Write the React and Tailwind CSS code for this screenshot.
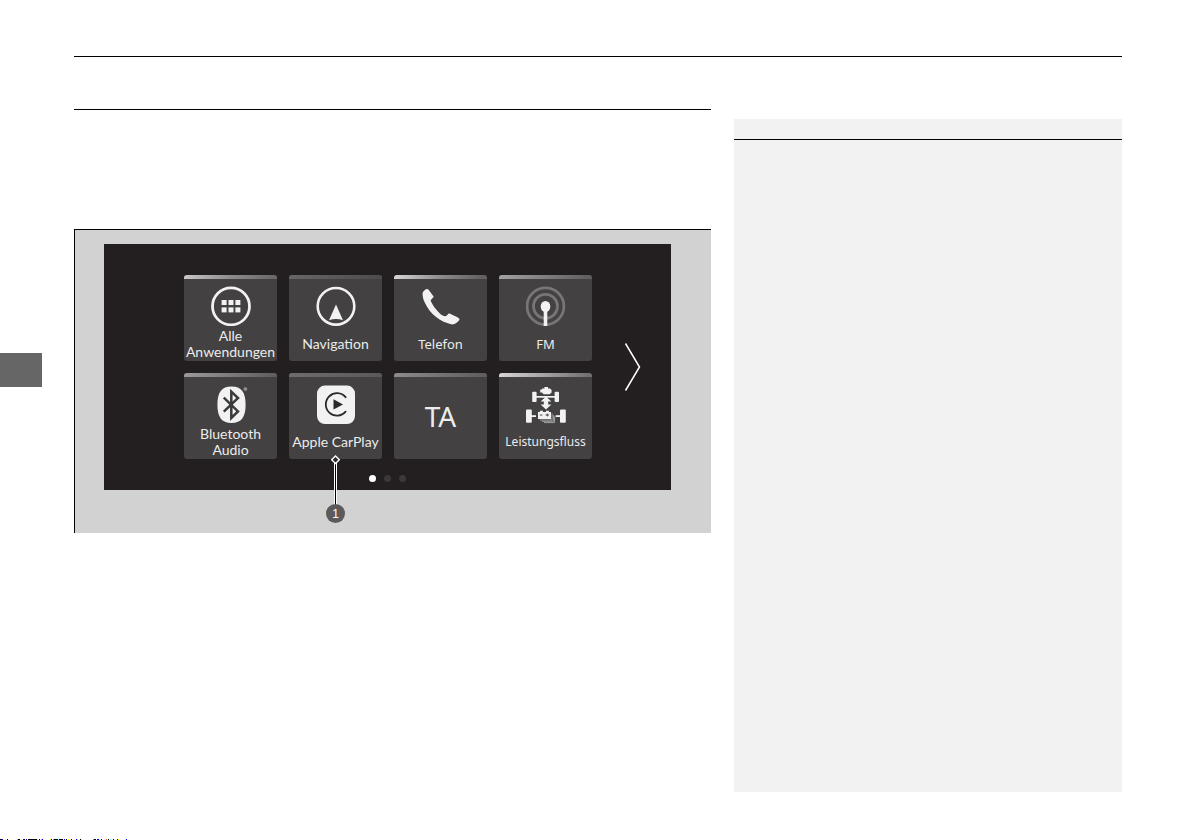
import React from 'react';

const ink = '#f2f2f2';

function AppsIcon() {
  return (
    <svg viewBox="0 0 40 40" className="size-10" fill={ink} aria-hidden="true">
      <circle cx="20" cy="20.3" r="18.5" fill="none" stroke={ink} strokeWidth="2.8" />
      {[10.6, 17.5, 24.4].map((x) =>
        [14, 21.4].map((y) => <rect key={`${x}-${y}`} x={x} y={y} width="5" height="5" />)
      )}
    </svg>
  );
}

function NavigationIcon() {
  return (
    <svg viewBox="0 0 40 40" className="size-10" aria-hidden="true">
      <circle cx="20" cy="20.3" r="18.3" fill="none" stroke={ink} strokeWidth="2.6" />
      <path d="M20 18.6 L27 34.2 Q20 31.6 13 34.2 Z" fill={ink} />
    </svg>
  );
}

function PhoneIcon() {
  return (
    <svg viewBox="0 0 40 40" className="size-10" aria-hidden="true">
      <path
        fill={ink}
        d="M5.6 3 C3.5 4 1.6 5.6 1.5 7.5 C1.6 11 2.4 14.3 4 17 C6.6 22.4 10.4 27.4 14.8 30.8 C19.6 34.6 25.4 37.6 31.2 38.4 C34.4 38.4 37.2 36 38.6 33.6 C38.4 32.6 37.4 31.8 36.4 31.2 L28 27.3 L25.2 30 C23 30.6 20.6 29.2 18.6 27.2 C15.4 24.2 12.6 20.6 10.8 17 C9.9 15.4 9.6 14.6 9.8 13.9 L12.8 10.7 L7.6 3.8 C7 3 6.3 2.7 5.6 3 Z"
      />
    </svg>
  );
}

function RadioIcon() {
  return (
    <svg viewBox="0 0 40 40" className="size-10" aria-hidden="true">
      <g fill="none" stroke="#777575">
        <circle cx="19.5" cy="20.3" r="18.4" strokeWidth="2.8" />
        <circle cx="19.5" cy="20.3" r="12" strokeWidth="2.8" />
      </g>
      <ellipse cx="19.5" cy="20.5" rx="4.8" ry="5.6" fill={ink} />
      <rect x="17.7" y="24" width="3.6" height="16" fill={ink} />
    </svg>
  );
}

function BluetoothIcon() {
  return (
    <svg viewBox="0 0 40 40" className="size-10" aria-hidden="true">
      <path
        fill={ink}
        d="M20.5 2.6 C30.5 2.6 34.6 8.5 34.6 20.8 C34.6 33 30.5 39 20.5 39 C10.5 39 6.4 33 6.4 20.8 C6.4 8.5 10.5 2.6 20.5 2.6 Z"
      />
      <path
        fill="none"
        stroke="#3c3a3a"
        strokeWidth="2.5"
        d="M12.8 13.6 L27 27.4 L20.3 34 V7.6 L27 14 L12.8 27.6"
      />
      <circle cx="34.4" cy="5" r="1.5" fill="#8a8888" stroke="#aaa" strokeWidth="0.6" />
    </svg>
  );
}

function CarPlayIcon() {
  return (
    <svg viewBox="0 0 40 40" className="size-10" aria-hidden="true">
      <rect x="1" y="1.6" width="38" height="38.4" rx="8" fill={ink} />
      <path
        d="M29.6 13.2 A11.2 11.2 0 1 0 29.6 27.6"
        fill="none"
        stroke="#2b2929"
        strokeWidth="1.8"
        strokeLinecap="round"
      />
      <path d="M17.5 15.2 L27 20.4 L17.5 25.6 Z" fill="#2b2929" />
    </svg>
  );
}

function PowerFlowIcon() {
  return (
    <svg viewBox="0 0 40 40" className="size-10" fill={ink} aria-hidden="true">
      <rect x="6.2" y="7.7" width="4.4" height="10.4" rx="1" />
      <rect x="28.6" y="7.7" width="4.4" height="10.4" rx="1" />
      <rect x="10" y="12" width="20" height="1.7" />
      <path d="M14.2 5.6 H16 V4.6 H18.4 V3 H22 V4.6 H24 L25.6 6 V8.4 L23.6 10.2 H17.6 L16 8.6 H14.2 Z" />
      <path d="M20 12.6 L25.4 17.4 H22.2 V20.6 H25.4 L20 25.6 L14.6 20.6 H17.8 V17.4 H14.6 Z" />
      <rect x="0" y="25.4" width="5.8" height="13.4" rx="1" />
      <rect x="34" y="25.4" width="5.8" height="13.4" rx="1" />
      <rect x="5" y="31.2" width="5" height="1.8" />
      <rect x="29.6" y="31.2" width="5" height="1.8" />
      <path d="M12 28 H14 V26.8 H17 V28 H20 V26.8 H23 V28 H25 V35 H12 Z" />
      <path d="M13.8 31 H16.4 M19.6 31 H23 M21.3 29.6 V32.4" stroke="#3c3a3a" strokeWidth="0.9" />
      <path
        d="M26 29.4 V36 H14 M27.4 31 V37.3 H16 M28.6 32.4 V38.6 H18"
        fill="none"
        stroke="#b8b6b6"
        strokeWidth="0.8"
      />
    </svg>
  );
}

const tiles = [
  { label: ['Alle', 'Anwendungen'], Icon: AppsIcon, bar: 'from-[#c9c7c7] via-[#8d8b8b] to-[#686666]', font: "font-['Lato',sans-serif] text-sm leading-4" },
  { label: ['Navigation'], Icon: NavigationIcon, bar: 'from-[#686666] to-[#4d4b4b]', font: "font-['Lato',sans-serif] text-sm leading-4" },
  { label: ['Telefon'], Icon: PhoneIcon, bar: 'from-[#d8d6d6] via-[#8d8b8b] to-[#5e5c5c]', font: "font-['Noto_Sans',sans-serif] text-[13px] leading-4" },
  { label: ['FM'], Icon: RadioIcon, bar: 'from-[#a3a1a1] to-[#5e5c5c]', font: "font-['Noto_Sans',sans-serif] text-[13px] leading-4" },
  { label: ['Bluetooth', 'Audio'], Icon: BluetoothIcon, bar: 'from-[#9b9999] to-[#5e5c5c]', font: "font-['Lato',sans-serif] text-sm leading-4" },
  { label: ['Apple CarPlay'], Icon: CarPlayIcon, bar: 'from-[#6e6c6c] to-[#5a5858]', font: "font-['Lato',sans-serif] text-sm leading-4", callout: '1' },
  { label: ['TA'], bar: 'from-[#8d8b8b] to-[#5e5c5c]' },
  { label: ['Leistungsfluss'], Icon: PowerFlowIcon, bar: 'from-[#d8d6d6] via-[#a3a1a1] to-[#6e6c6c]', font: "font-['Noto_Sans',sans-serif] text-xs leading-4" },
];

function Callout({ number }) {
  return (
    <div className="pointer-events-none absolute inset-x-0 top-[82px] flex flex-col items-center">
      <svg viewBox="0 0 11 50" className="h-[50px] w-[11px]" aria-hidden="true">
        <rect x="4" y="8" width="3" height="42" fill="#fff" />
        <rect x="5" y="8" width="1" height="42" fill="#000" />
        <path d="M5.5 1 L9.3 4.8 L5.5 8.6 L1.7 4.8 Z" fill="#2b2929" stroke="#fff" strokeWidth="1.4" />
      </svg>
      <span className="-mt-px flex size-[19px] items-center justify-center rounded-full bg-[#5c5a5b] font-['Liberation_Sans',sans-serif] text-xs leading-none text-white">
        {number}
      </span>
    </div>
  );
}

function Tile({ label, Icon, bar, font, callout }) {
  return (
    <div className="relative">
      <button type="button" className="flex h-[86px] w-full flex-col items-center overflow-hidden rounded-[3px] bg-[#434141] text-[#ececec]">
        <span className={`h-1 w-full shrink-0 bg-linear-to-r ${bar}`} />
        {Icon ? (
          <>
            <span className="mt-[7px] shrink-0">
              <Icon />
            </span>
            <span className={`mt-0.5 flex h-8 shrink-0 flex-col justify-center whitespace-nowrap ${font}`}>
              {label.map((line) => (
                <span key={line} className="block">{line}</span>
              ))}
            </span>
          </>
        ) : (
          <span className="flex flex-1 items-center pb-1 font-['Noto_Sans',sans-serif] text-[28px] leading-8">{label[0]}</span>
        )}
      </button>
      {callout && <Callout number={callout} />}
    </div>
  );
}

const marks = [
  [0, 2, '#000'], [2, 1, '#00f'], [5, 1, '#ff0'], [7, 1, '#000'], [17, 1, '#f99'], [18, 2, '#000'],
  [21, 1, '#ff0'], [23, 1, '#00f'], [24, 1, '#000'], [26, 1, '#00f'], [28, 9, '#000'], [37, 1, '#6ff'],
  [39, 1, '#000'], [41, 1, '#f6f'], [42, 1, '#00f'], [50, 1, '#ff0'], [51, 1, '#000'], [53, 1, '#f66'],
  [54, 4, '#000'], [58, 1, '#6ff'], [59, 4, '#000'], [64, 1, '#00f'], [66, 1, '#000'], [68, 1, '#ff0'],
  [71, 1, '#000'], [76, 1, '#00f'], [77, 1, '#6ff'], [80, 1, '#000'], [81, 1, '#ff0'], [93, 1, '#f66'],
  [94, 2, '#000'], [97, 2, '#00f'], [99, 1, '#ff0'], [101, 1, '#000'], [106, 1, '#f66'], [108, 1, '#000'],
  [110, 1, '#6ff'], [113, 1, '#000'], [117, 1, '#00f'], [118, 1, '#ff0'], [125, 1, '#ff0'], [126, 1, '#00f'],
];

export default function App() {
  return (
    <div className="flex min-h-screen flex-col bg-white">
      <div className="flex flex-1">
        <div className="w-[74px] shrink-0 pt-[353px]">
          <div className="h-[34px] w-[42px] bg-[#666]" />
        </div>
        <main className="min-w-0 flex-1 pt-14 pr-[70px]">
          <div className="flex items-start gap-[23px] border-t border-black">
            <section className="mt-[52px] min-w-0 flex-1 border-t border-black pt-[119px]">
              <figure className="border-t border-l border-black bg-[#d2d2d2] pt-[14px] pr-10 pb-[43px] pl-[29px]">
                <div className="bg-[#231f20] pt-[31px] pb-2">
                  <div className="flex items-center pl-20">
                    <div className="grid w-[408px] shrink-0 grid-cols-4 gap-3">
                      {tiles.map((tile) => (
                        <Tile key={tile.label[0]} {...tile} />
                      ))}
                    </div>
                    <button type="button" aria-label="Weiter" className="ml-8 shrink-0">
                      <svg viewBox="0 0 17 50" className="h-[50px] w-[17px]" fill="none" aria-hidden="true">
                        <path d="M1.5 1.5 L15.5 25 L1.5 48.5" stroke="#fff" strokeWidth="1.5" />
                      </svg>
                    </button>
                  </div>
                  <div className="mt-4 flex justify-center gap-2">
                    <span className="size-[7px] rounded-full bg-white" />
                    <span className="size-[7px] rounded-full bg-[#3b3839]" />
                    <span className="size-[7px] rounded-full bg-[#3b3839]" />
                  </div>
                </div>
              </figure>
            </section>
            <aside className="mt-[62px] min-h-[673px] w-[388px] shrink-0 bg-[#f2f2f2] pt-5">
              <div className="border-t border-black" />
            </aside>
          </div>
        </main>
      </div>
      <svg viewBox="0 0 128 1" className="h-px w-32" shapeRendering="crispEdges" aria-hidden="true">
        {marks.map(([x, width, fill]) => (
          <rect key={x} x={x} y="0" width={width} height="1" fill={fill} />
        ))}
      </svg>
    </div>
  );
}
